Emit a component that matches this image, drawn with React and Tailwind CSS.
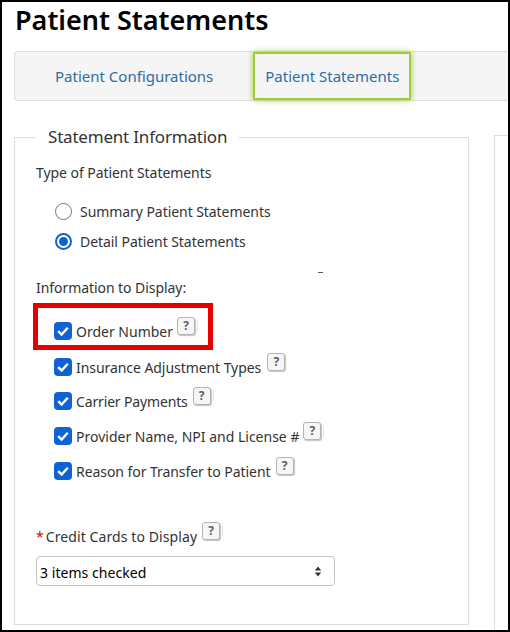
import React from 'react';

const infoOptions = [
    { label: 'Insurance Adjustment Types', rowClass: 'mt-[16px]', helpClass: 'ml-[6px]' },
    { label: 'Carrier Payments', rowClass: 'mt-[14px]', labelClass: 'tracking-[-0.15px]', helpClass: 'ml-[5px]', mark: true },
    { label: 'Provider Name, NPI and License #', rowClass: 'mt-[15px]', labelClass: 'tracking-normal', helpClass: 'ml-[4px]', mark: true },
    { label: 'Reason for Transfer to Patient', rowClass: 'mt-[15px]', helpClass: 'ml-[5px]' },
];

function HelpIcon({ mark, helpClass }) {
    return (
        <>
            <span className={`relative -top-[5px] flex h-[18px] w-[18px] flex-shrink-0 items-center justify-center rounded-[3px] border border-[#b4b4b4] bg-[#f6f6f6] text-[12px] font-bold leading-none text-[#606060] shadow-[1px_1px_1px_#c4c4c4] ${helpClass}`}>
                ?
            </span>
            {mark && <span className="relative -top-[5px] ml-[2px] h-[10px] w-px bg-[#e4e4e4]"></span>}
        </>
    );
}

function Checkbox() {
    return (
        <span className="flex h-[18px] w-[18px] flex-shrink-0 items-center justify-center rounded-[4px] bg-[#0f62d6]">
            <svg viewBox="0 0 18 18" className="h-[18px] w-[18px]" fill="none" stroke="white" strokeWidth="2.4">
                <path d="M4.2 9.2 7.6 12.6 13.8 5.8" />
            </svg>
        </span>
    );
}

function Radio({ checked }) {
    return (
        <span className={checked
            ? "flex h-[17px] w-[17px] items-center justify-center rounded-full border-2 border-[#0f62d6] bg-white"
            : "h-[17px] w-[17px] rounded-full border border-[#767676] bg-white"}
        >
            {checked && <span className="h-[9px] w-[9px] rounded-full bg-[#0f62d6]"></span>}
        </span>
    );
}

function CheckRow({ label, rowClass, labelClass, helpClass, mark }) {
    return (
        <div className={`flex h-[20px] items-center ${rowClass}`}>
            <Checkbox />
            <span className={`ml-[4px] whitespace-nowrap ${labelClass}`}>{label}</span>
            <HelpIcon mark={mark} helpClass={helpClass} />
        </div>
    );
}

export default function App() {
    return (
        <div className="relative h-[632px] w-[510px] overflow-hidden border-2 border-black bg-white font-['Noto_Sans','Open_Sans',sans-serif] text-[14px] tracking-[-0.06px] text-[#333]">
            <h1 className="ml-[13px] h-[35px] text-[27px] font-semibold leading-[35px] tracking-normal text-black">Patient Statements</h1>

            {/* Tabs */}
            <div className="ml-[12px] mt-[14px] flex h-[50px] items-center rounded-l-[4px] border border-r-0 border-[#dddddd] bg-[#f5f5f5] text-[15px] tracking-normal text-[#2e6da4]">
                <span className="ml-[40px] whitespace-nowrap">Patient Configurations</span>
                <span className="ml-[40px] flex h-[48px] w-[158px] items-center justify-center whitespace-nowrap border-2 border-[#9ccb3b] shadow-[0_0_6px_#9ccb3b]">Patient Statements</span>
            </div>

            <div className="ml-[12px] mt-[24px] flex gap-[25px]">
                <fieldset className="h-[500px] w-[455px] flex-shrink-0 border border-[#dddddd] px-[21px]">
                    <legend className="px-[12px] text-[17px] leading-[24px] tracking-[-0.2px] text-[#333]">Statement Information</legend>

                    <div className="mt-[14px] h-[20px] leading-[20px]">Type of Patient Statements</div>

                    <div className="ml-[19px] mt-[18px] flex h-[20px] items-center gap-[8px]">
                        <Radio />
                        <span>Summary Patient Statements</span>
                    </div>
                    <div className="ml-[19px] mt-[10px] flex h-[20px] items-center gap-[8px]">
                        <Radio checked />
                        <span>Detail Patient Statements</span>
                    </div>

                    <div className="mt-[27px] h-[20px] leading-[20px]">Information to Display:</div>

                    <div className="ml-[18px] mt-[23px]">
                        <CheckRow label="Order Number" rowClass="" labelClass="tracking-normal" helpClass="ml-[4px]" mark />
                        {infoOptions.map((option) => (
                            <CheckRow key={option.label} {...option} />
                        ))}
                    </div>

                    <div className="mt-[45px] flex h-[20px] items-center tracking-[0.09px]">
                        <span className="mr-[2px] text-[#e00000]">*</span>
                        <span>Credit Cards to Display</span>
                        <HelpIcon mark helpClass="ml-[5px]" />
                    </div>

                    <div className="mt-[10px] flex h-[30px] w-[299px] items-center justify-between rounded-[4px] border border-[#c4c4c4] bg-white pl-[3px] pr-[12px] tracking-[0.05px] text-black">
                        <span className="pt-[2px]">3 items checked</span>
                        <svg viewBox="0 0 8 12" className="h-[11px] w-[8px]" fill="#333">
                            <path d="M4 0.5 7.5 5H0.5Z" />
                            <path d="M4 11.5 7.5 7H0.5Z" />
                        </svg>
                    </div>
                </fieldset>

                <div className="mt-[10px] h-[500px] flex-1 border-l border-t border-[#dddddd]"></div>
            </div>

            {/* Red highlight box over the first option */}
            <div className="absolute left-[31px] top-[301px] h-[47px] w-[180px] border-[5px] border-[#e80000]"></div>
            <div className="absolute left-[316px] top-[270px] h-px w-[5px] bg-[#555]"></div>
        </div>
    );
}
